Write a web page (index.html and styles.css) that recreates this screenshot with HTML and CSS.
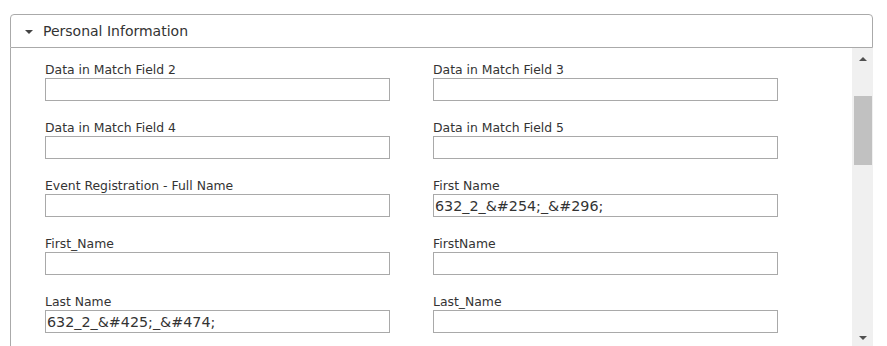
FILE: index.html
```html
<!DOCTYPE html>
<html lang="en">
<head>
    <meta charset="UTF-8">
    <title>Personal Information</title>
    <link rel="stylesheet" href="styles.css">
</head>
<body>
    <div class="panel">
        <div class="panel-header">
            <span class="caret"></span>
            <span class="panel-title">Personal Information</span>
        </div>
        <div class="panel-body">
            <div class="form-grid">
                <div class="field">
                    <label>Data in Match Field 2</label>
                    <input type="text" value="">
                </div>
                <div class="field">
                    <label>Data in Match Field 3</label>
                    <input type="text" value="">
                </div>
                <div class="field">
                    <label>Data in Match Field 4</label>
                    <input type="text" value="">
                </div>
                <div class="field">
                    <label>Data in Match Field 5</label>
                    <input type="text" value="">
                </div>
                <div class="field">
                    <label>Event Registration - Full Name</label>
                    <input type="text" value="">
                </div>
                <div class="field">
                    <label>First Name</label>
                    <input type="text" value="632_2_&amp;#254;_&amp;#296;">
                </div>
                <div class="field">
                    <label>First_Name</label>
                    <input type="text" value="">
                </div>
                <div class="field">
                    <label>FirstName</label>
                    <input type="text" value="">
                </div>
                <div class="field">
                    <label>Last Name</label>
                    <input type="text" value="632_2_&amp;#425;_&amp;#474;">
                </div>
                <div class="field">
                    <label>Last_Name</label>
                    <input type="text" value="">
                </div>
            </div>
            <div class="scrollbar">
                <div class="scroll-btn"><span class="arrow-up"></span></div>
                <div class="scroll-track">
                    <div class="scroll-thumb"></div>
                </div>
                <div class="scroll-btn scroll-btn-down"><span class="arrow-down"></span></div>
            </div>
        </div>
    </div>
</body>
</html>
```

FILE: styles.css
```css
html, body {
    overflow: hidden;
}
body {
    margin: 0;
    padding: 14px 0 0 10px;
    font-family: "DejaVu Sans", Verdana, sans-serif;
    color: #333333;
    background-color: #ffffff;
}
.panel {
    width: 863px;
}
.panel-header {
    display: flex;
    align-items: center;
    height: 32px;
    border: 1px solid #aaaaaa;
    border-radius: 4px 4px 0 0;
    padding-left: 14px;
}
.caret {
    width: 0;
    height: 0;
    border-left: 4px solid transparent;
    border-right: 4px solid transparent;
    border-top: 4px solid #444444;
    margin-right: 10px;
    margin-top: 1px;
}
.panel-title {
    font-size: 14px;
    line-height: 32px;
    color: #333333;
}
.panel-body {
    display: flex;
    height: 300px;
    border-left: 1px solid #aaaaaa;
    overflow: hidden;
}
.form-grid {
    flex: 1;
    display: grid;
    grid-template-columns: 345px 345px;
    column-gap: 43px;
    align-content: start;
    padding: 14px 0 0 34px;
}
.field {
    margin-bottom: 19px;
}
.field label {
    display: block;
    font-size: 12.4px;
    line-height: 16px;
    color: #333333;
}
.field input {
    display: block;
    box-sizing: border-box;
    width: 345px;
    height: 23px;
    margin: 0;
    padding: 0 1px;
    border: 1px solid #a9a9a9;
    font-family: "DejaVu Sans", Verdana, sans-serif;
    font-size: 14.3px;
    color: #333333;
    outline: none;
}
.scrollbar {
    width: 21px;
    display: flex;
    flex-direction: column;
    background-color: #f0f0f0;
}
.scroll-btn {
    height: 22px;
    display: flex;
    align-items: center;
    justify-content: center;
}
.scroll-btn-down {
    height: 20px;
}
.arrow-up {
    width: 0;
    height: 0;
    border-left: 4px solid transparent;
    border-right: 4px solid transparent;
    border-bottom: 4px solid #505050;
}
.arrow-down {
    width: 0;
    height: 0;
    border-left: 4px solid transparent;
    border-right: 4px solid transparent;
    border-top: 4px solid #505050;
}
.scroll-track {
    flex: 1;
    padding: 26px 1px 0 2px;
}
.scroll-thumb {
    height: 69px;
    background-color: #c1c1c1;
}
```
